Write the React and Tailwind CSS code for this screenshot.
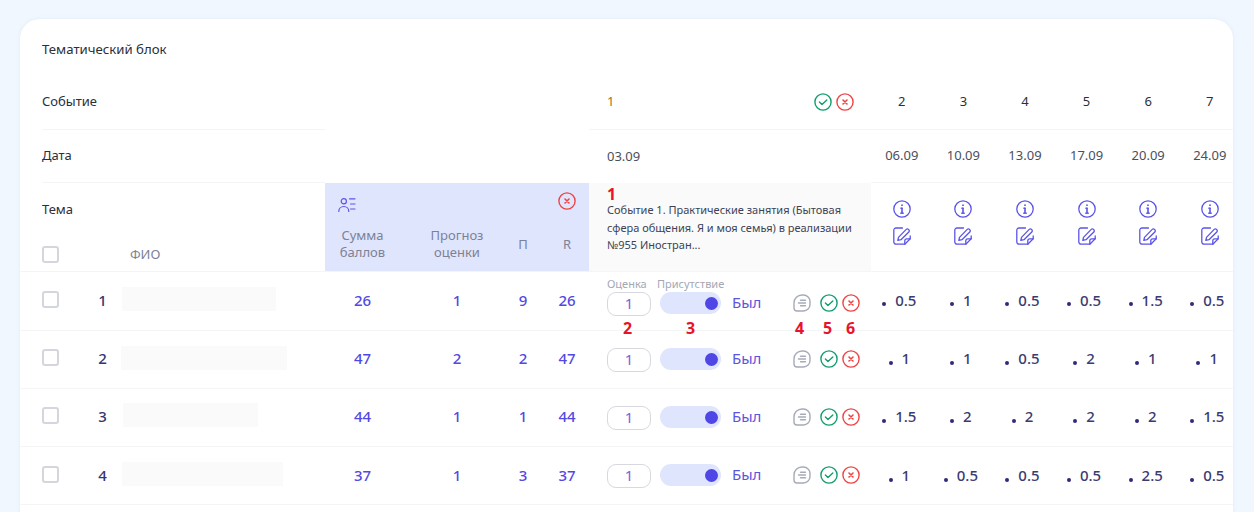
import React from 'react';

const rowGrid = "grid grid-cols-[305px_264px_282px_repeat(6,61.6px)]";
const sumGrid = "grid grid-cols-[75px_101px_44px_44px] items-center text-center";

const CheckIcon = () => (
    <svg className="w-[18px] h-[18px] shrink-0" viewBox="0 0 18 18" fill="none" stroke="#129d70" strokeWidth="1.4" strokeLinecap="round" strokeLinejoin="round">
        <circle cx="9" cy="9" r="8.1" />
        <path d="M5.4 9.1l2.6 2.5 4.8-4.6" />
    </svg>
);

const CrossIcon = () => (
    <svg className="w-[18px] h-[18px] shrink-0" viewBox="0 0 18 18" fill="none" stroke="#ee4444" strokeWidth="1.4" strokeLinecap="round">
        <circle cx="9" cy="9" r="8.1" />
        <path d="M7 7l4 4M11 7l-4 4" strokeWidth="1.6" />
    </svg>
);

const CommentIcon = () => (
    <svg className="w-[18px] h-[18px] shrink-0" viewBox="0 0 18 18" fill="none" stroke="#a6abb8" strokeWidth="1.4" strokeLinecap="round" strokeLinejoin="round">
        <path d="M9 1h1.5A6.5 6.5 0 0 1 17 7.5v3a6.5 6.5 0 0 1-6.5 6.5H4a3 3 0 0 1-3-3V9a8 8 0 0 1 8-8z" />
        <path d="M7.5 6.2h5M5.5 9h7M7.5 11.8h5" />
    </svg>
);

const UsersListIcon = () => (
    <svg className="w-[18px] h-[18px]" viewBox="0 0 18 18" fill="none" stroke="#5b54e8" strokeWidth="1.2" strokeLinecap="round">
        <circle cx="5.8" cy="5.2" r="2.6" />
        <path d="M0.8 15.5c0-3 2.2-5 5-5s5 2 5 5" />
        <path d="M11.5 2.8h5.5M12.5 8h4.5M12.5 13h4.5" />
    </svg>
);

const InfoIcon = () => (
    <svg className="w-[18px] h-[18px]" viewBox="0 0 18 18" fill="none" stroke="#5b54e8" strokeWidth="1.3" strokeLinecap="round">
        <circle cx="9" cy="9" r="8.2" />
        <path d="M9 8.2v5" strokeWidth="1.6" />
        <path d="M7.8 8.2H9M7.6 13.2h2.8" />
        <circle cx="9" cy="5.2" r="0.9" fill="#5b54e8" stroke="none" />
    </svg>
);

const NoteEditIcon = () => (
    <svg className="w-[18px] h-[18px]" viewBox="0 0 18 18" fill="none" stroke="#5b54e8" strokeWidth="1.3" strokeLinecap="round" strokeLinejoin="round">
        <path d="M9.5 1H3a2.2 2.2 0 0 0-2.2 2.2V15A2.2 2.2 0 0 0 3 17.2h8.8l5.4-5.4V9" />
        <path d="M11.8 17.2v-3.4a2 2 0 0 1 2-2h3.4" />
        <path d="M4.8 13.4l.7-3L13.2 2.4a1.6 1.6 0 0 1 2.3 0l.3.3a1.6 1.6 0 0 1 0 2.3L8 12.7l-3.2.7z" />
    </svg>
);

const Checkbox = ({ className = "" }) => (
    <div className={`w-[17px] h-[17px] shrink-0 rounded-[3px] border-2 border-[#d3d6dc] bg-white ${className}`} />
);

const Mark = ({ className, children }) => (
    <span className={`absolute text-[16px] leading-[14px] font-bold text-[#e8132b] ${className}`}>{children}</span>
);

const events = [
    { num: 2, date: "06.09" },
    { num: 3, date: "10.09" },
    { num: 4, date: "13.09" },
    { num: 5, date: "17.09" },
    { num: 6, date: "20.09" },
    { num: 7, date: "24.09" },
];

const students = [
    { id: 1, bar: "w-[154px] ml-0 -translate-y-px", sum: 26, forecast: 1, p: 9, r: 26, scores: ["0.5", "1", "0.5", "0.5", "1.5", "0.5"] },
    { id: 2, bar: "w-[166px] -ml-px -translate-y-[1px]", sum: 47, forecast: 2, p: 2, r: 47, scores: ["1", "1", "0.5", "2", "1", "1"] },
    { id: 3, bar: "w-[135px] ml-px -translate-y-[2px]", sum: 44, forecast: 1, p: 1, r: 44, scores: ["1.5", "2", "2", "2", "2", "1.5"] },
    { id: 4, bar: "w-[161px] ml-0 -translate-y-[2px]", sum: 37, forecast: 1, p: 3, r: 37, scores: ["1", "0.5", "0.5", "0.5", "2.5", "0.5"] },
];

const StudentRow = ({ student, first }) => {
    const lift = student.id === 4 ? "" : "pb-[2px]";
    return (
        <div className={`${rowGrid} border-b border-[#f4f5f7] ${first ? "h-[60px] border-t" : "h-[58px]"}`}>
            <div className={`flex items-center pl-[22px] ${lift}`}>
                <Checkbox className="-translate-y-px" />
                <div className="w-[39px] ml-[24px] text-center text-[15px] font-medium text-[#35356f]">{student.id}</div>
                <div className={`h-[24px] bg-[#fafafa] ${student.bar}`} />
            </div>

            <div className={`${sumGrid} text-[15px] font-medium text-[#5249e3] ${lift}`}>
                <div>{student.sum}</div>
                <div className="pl-[13px]">{student.forecast}</div>
                <div>{student.p}</div>
                <div>{student.r}</div>
            </div>

            <div className={`relative pl-[18px] pr-[11px] ${first ? "pt-[3px]" : "pt-[17px]"}`}>
                {first && (
                    <div className="flex h-[17px] text-[11px] leading-[17px] text-[#a4a8b4]">
                        <span className="w-[50px]">Оценка</span>
                        <span>Присутствие</span>
                    </div>
                )}
                <div className="flex items-start">
                    <div className="w-[44px] h-[24px] rounded-[9px] border border-[#d8d8e0] text-center text-[15px] leading-[21px] text-[#7f62d8]">1</div>
                    <div className="ml-[9px] w-[61px] h-[22px] rounded-full bg-[#e0e5fe] flex items-center justify-end pr-[3px]">
                        <div className="w-[13px] h-[13px] rounded-full bg-[#4f46e5]" />
                    </div>
                    <span className="ml-[11px] text-[15px] leading-[20px] text-[#5b54e0]">Был</span>
                    <div className="ml-auto mt-[2px] flex gap-[4px]">
                        <div className="mr-[5px]"><CommentIcon /></div>
                        <CheckIcon />
                        <CrossIcon />
                    </div>
                </div>
                {first && (
                    <>
                        <Mark className="left-[34px] top-[49px]">2</Mark>
                        <Mark className="left-[97px] top-[49px]">3</Mark>
                        <Mark className="left-[206px] top-[49px]">4</Mark>
                        <Mark className="left-[234px] top-[49px]">5</Mark>
                        <Mark className="left-[257px] top-[49px]">6</Mark>
                    </>
                )}
            </div>

            {student.scores.map((score, i) => (
                <div key={i} className={`flex items-center justify-center gap-[9px] pr-[5px] ${lift}`}>
                    <span className="w-[4px] h-[4px] mt-[8px] rounded-full bg-[#2f2a7c]" />
                    <span className="text-[15px] font-medium text-[#3b3b72]">{score}</span>
                </div>
            ))}
        </div>
    );
};

const App = () => {
    return (
        <div className="h-[512px] overflow-hidden bg-[#f0f7ff] pt-[19px] pl-[20px] pr-[21px] font-['Noto_Sans',sans-serif] text-[13px] text-[#2b2f3a]">
            <div className="h-[520px] overflow-hidden rounded-[20px] bg-white shadow-[0_0_4px_rgba(120,150,200,0.12)]">
                <div className="h-[57px] pl-[22px] pt-[20px] leading-5 text-[13.2px]">Тематический блок</div>

                <div className={`${rowGrid} h-[54px]`}>
                    <div className="ml-[22px] flex items-center pb-[2px] border-b border-[#f4f5f7]">Событие</div>
                    <div />
                    <div className="flex items-center pl-[18px] pr-[17px] pb-[2px] border-b border-[#f4f5f7]">
                        <span className="text-[#a9701c]">1</span>
                        <div className="ml-auto flex gap-[4px]">
                            <CheckIcon />
                            <CrossIcon />
                        </div>
                    </div>
                    {events.map((e) => (
                        <div key={e.num} className="flex items-center justify-center pb-[2px] border-b border-[#f4f5f7]">{e.num}</div>
                    ))}
                </div>

                <div className={`${rowGrid} h-[53px]`}>
                    <div className="ml-[22px] flex items-center border-b border-[#f4f5f7]">Дата</div>
                    <div />
                    <div className="flex items-center pl-[18px] text-[#4a4f5e]">03.09</div>
                    {events.map((e) => (
                        <div key={e.num} className="flex items-center justify-center border-b border-[#f4f5f7] text-[#4a4f5e]">{e.date}</div>
                    ))}
                </div>

                <div className={`${rowGrid} h-[88px]`}>
                    <div className="pl-[22px] pt-[16px]">
                        <div className="leading-5">Тема</div>
                        <div className="mt-[26px] flex items-center">
                            <Checkbox />
                            <span className="ml-[71px] text-[#7b8296]">ФИО</span>
                        </div>
                    </div>

                    <div className="bg-[#e0e5fe] pt-[9px]">
                        <div className="flex items-center justify-between pl-[13px] pr-[13px] h-[18px]">
                            <div className="mt-[8px]"><UsersListIcon /></div>
                            <CrossIcon />
                        </div>
                        <div className={`${sumGrid} mt-[17px] leading-[17px] text-[#7b8296]`}>
                            <div>Сумма<br />баллов</div>
                            <div className="pl-[13px]">Прогноз<br />оценки</div>
                            <div>П</div>
                            <div>R</div>
                        </div>
                    </div>

                    <div className="relative bg-[#fafafa] pl-[18px] pr-[12px] pt-[18px] text-[11px] leading-[17.5px] text-[#3d4354]">
                        <Mark className="left-[18px] top-[4px]">1</Mark>
                        Событие 1. Практические занятия (Бытовая сфера общения. Я и моя семья) в реализации №955 Иностран...
                    </div>

                    {events.map((e) => (
                        <div key={e.num} className="flex flex-col items-center gap-[9px] pt-[17px]">
                            <InfoIcon />
                            <NoteEditIcon />
                        </div>
                    ))}
                </div>

                {students.map((s, i) => (
                    <StudentRow key={s.id} student={s} first={i === 0} />
                ))}
            </div>
        </div>
    );
};

export default App;
